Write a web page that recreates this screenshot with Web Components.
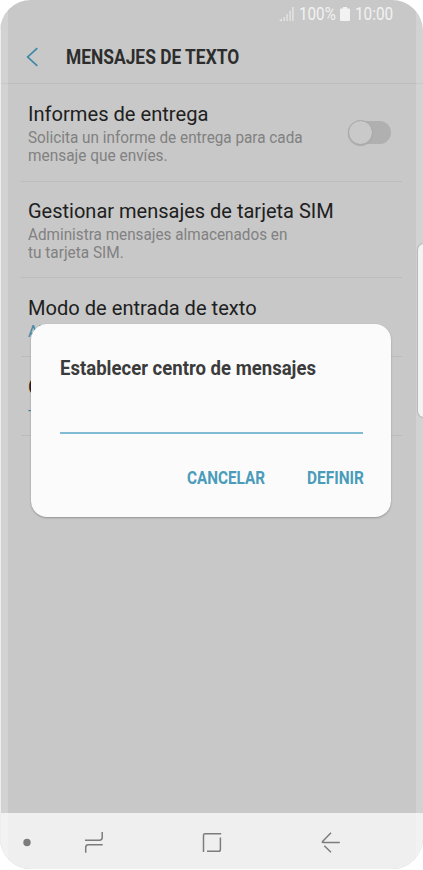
<!DOCTYPE html>
<html lang="es">
<head>
<meta charset="utf-8">
<title>Mensajes de texto</title>
<style>
html,body{margin:0;background:#fff;overflow:hidden}
</style>
</head>
<body>
<phone-screen></phone-screen>
<script>
const define = (name, html, ready) => {
  const t = document.createElement('template');
  t.innerHTML = html;
  customElements.define(name, class extends HTMLElement {
    constructor() {
      super();
      this.attachShadow({mode: 'open'}).append(t.content.cloneNode(true));
    }
    connectedCallback() { if (ready) ready.call(this, this.shadowRoot); }
  });
};

// One line of text squeezed or stretched to the width given in its "w" attribute.
define('fit-text', `
<style>
:host{display:block;white-space:nowrap;flex:none}
span{display:inline-block;transform-origin:0 50%}
</style><span><slot></slot></span>`, function (root) {
  const s = root.querySelector('span');
  const w = +this.getAttribute('w');
  this.style.width = w + 'px';
  requestAnimationFrame(() => { s.style.transform = `scaleX(${w / s.offsetWidth})`; });
  s.style.transform = `scaleX(${w / (s.getBoundingClientRect().width || w)})`;
});

define('status-bar', `
<style>
:host{display:flex;height:30px;box-sizing:border-box;padding:0 30px 2px 0;justify-content:flex-end;align-items:center;color:#f2f2f2;font-size:17.5px;line-height:20px}
svg{display:block;flex:none}
.sig{margin-right:5px}.bat{margin:0 5px 0 4px}
</style>
<svg class="sig" width="15" height="14" viewBox="0 0 15 14" fill="#e8e8e8"><path d="M0 14L3 11.5V14ZM4.6 10h1.2v4H4.600ZM7.500 7h1.200v7H7.500ZM10.500 3.800h1.200V14h-1.200ZM13.300 0h1.300v14h-1.300Z"/></svg>
<fit-text w="36.5">100%</fit-text>
<svg class="bat" width="10" height="14" viewBox="0 0 10 14"><path fill="#f2f2f2" d="M3 0h4v1.500h2q1 0 1 1V13q0 1-1 1H1q-1 0-1-1V2.500q0-1 1-1h2Z"/></svg>
<fit-text w="38.500">10:00</fit-text>`);

define('title-bar', `
<style>
:host{display:flex;height:54px;box-sizing:border-box;align-items:center;padding:1px 0 0 26px;border-bottom:1px solid #bdbdbd;color:#2d2d2d;font-weight:700;font-size:19.6px;line-height:24px}
svg{display:block;margin-right:27px}
fit-text{padding-top:2px}
</style>
<svg width="13" height="20" viewBox="0 0 13 20" fill="none" stroke="#3f87a4" stroke-width="1.700"><path d="M11.300 1.100L1.700 10L11.300 18.900"/></svg>
<fit-text w="173"><slot></slot></fit-text>`);

define('toggle-switch', `
<style>
:host{display:flow-root;width:43px;height:23px;border-radius:12px;background:#b0b0b0;flex:none}
i{display:block;width:23px;height:23px;border-radius:50%;background:#c9c9c9;border:1px solid #a8a8a8;margin-top:-1px;box-shadow:0 1px 1px #aaa}
</style><i></i>`);

define('setting-row', `
<style>
:host{display:flex;box-sizing:border-box;margin:0 21px;padding:17px 11px 0 7px;border-bottom:1px solid #bcbcbc;justify-content:space-between}
.t{color:#202020;font-size:20px;line-height:26px}
.d{color:#818181;font-size:15.700px;line-height:18px;margin-top:2px}
::slotted(toggle-switch){margin-top:20px}
</style>
<div><div class="t"><slot name="title"></slot></div><div class="d"><slot></slot></div></div><slot name="control"></slot>`);

define('nav-bar', `
<style>
:host{display:block;height:56px;background:#efefef}
svg{display:block}
</style>
<svg width="423" height="56" viewBox="0 0 423 56" fill="none" stroke="#7c7c7c" stroke-width="1.500">
<circle cx="27" cy="29.500" r="3.700" fill="#7c7c7c" stroke="none"/>
<path d="M85 27.200H99.500Q102.200 27.200 102.200 24.500V19M102.700 31.800H88.500Q85.700 31.800 85.700 34.500V39.800"/>
<path d="M203.500 39V22.300Q203.500 20.700 205.100 20.700H221.200M220.400 24.500V36.500Q220.400 38.300 218.600 38.300H207"/>
<path d="M339.800 29.500H323.200Q321.700 29.500 322.800 28.300L331 19.800M324.300 32.800L331 39.200"/>
</svg>`);

define('message-dialog', `
<style>
:host{display:flex;flex-direction:column;box-sizing:border-box;width:360px;height:193px;padding:31px 28px 0 28.5px;border-radius:16px;background:#fbfbfb;box-shadow:0 1px 2px #0004;color:#3b3b3b;font-weight:700}
h2{margin:0;font-size:20.800px;line-height:26px}
.field{height:51px;border-bottom:2px solid #80bcd3}
.actions{display:flex;justify-content:flex-end;gap:42px;margin-top:33px;font-size:18px;line-height:22px;color:#4a9cba}
</style>
<h2><fit-text w="256">Establecer centro de mensajes</fit-text></h2>
<div class="field"></div>
<div class="actions"><fit-text w="78">CANCELAR</fit-text><fit-text w="56.500">DEFINIR</fit-text></div>`);

define('phone-screen', `
<style>
:host{display:flex;flex-direction:column;position:relative;width:423px;height:869px;overflow:hidden;font-family:Roboto,"Liberation Sans",sans-serif;border-radius:31px;background:#c8c8c8}
main{flex:1;min-height:0}
.r1{height:98px}.r2{height:96px;padding-top:16px}.r3{height:79px}.r4{height:79px}
.blue{color:#3f87a4}
.edge{position:absolute;top:0;bottom:0;width:8px;background:#ffffff30}
.l{left:0;border-left:1px solid #eee;box-sizing:border-box}.r{right:0;width:7px}
.panel{position:absolute;left:418px;top:244px;width:12px;height:173px;border-radius:6px;background:#f3f3f3;box-shadow:0 0 1px 1px #0002}
message-dialog{position:absolute;left:31px;top:324px}
</style>
<status-bar></status-bar>
<title-bar>MENSAJES DE TEXTO</title-bar>
<main>
<setting-row class="r1"><fit-text slot="title" w="180">Informes de entrega</fit-text><fit-text w="275">Solicita un informe de entrega para cada</fit-text><fit-text w="139.500">mensaje que envíes.</fit-text><toggle-switch slot="control"></toggle-switch></setting-row>
<setting-row class="r2"><fit-text slot="title" w="306">Gestionar mensajes de tarjeta SIM</fit-text><fit-text w="259">Administra mensajes almacenados en</fit-text><fit-text w="96">tu tarjeta SIM.</fit-text></setting-row>
<setting-row class="r3"><fit-text slot="title" w="229">Modo de entrada de texto</fit-text><span class="blue">Abc</span></setting-row>
<setting-row class="r4"><span slot="title">C</span><span class="blue">-</span></setting-row>
</main>
<nav-bar></nav-bar>
<div class="edge l"></div><div class="edge r"></div>
<div class="panel"></div>
<message-dialog></message-dialog>`);
</script>
</body>
</html>
